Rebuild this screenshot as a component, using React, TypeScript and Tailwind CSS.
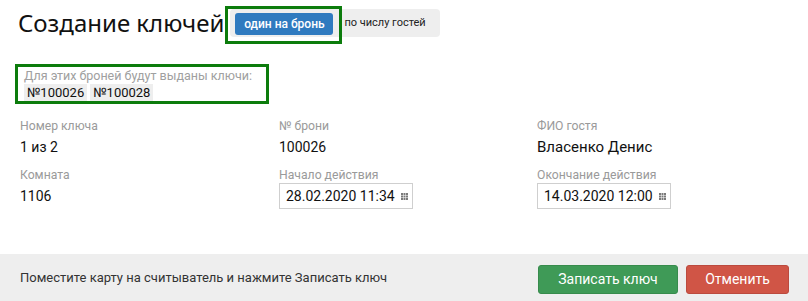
import React from "react";

const GridIcon = () => (
  <svg width="7" height="7" viewBox="0 0 7 7" className="shrink-0">
    {[0, 1, 2].map((r) =>
      [0, 1, 2].map((c) => (
        <rect key={`${r}-${c}`} x={c * 2.5} y={r * 2.5} width="2" height="2" fill="#7a7a7a" />
      ))
    )}
  </svg>
);

function Field({ label, value, big }: { label: string; value: string; big?: boolean }) {
  return (
    <div className="flex flex-col">
      <div className="text-[12.2px] leading-[16px] text-[#9a9a9a]">{label}</div>
      <div className={`mt-[3px] leading-[20px] text-[#111] ${big ? "text-[15px]" : "text-[14px]"}`}>{value}</div>
    </div>
  );
}

function DateField({ label, value }: { label: string; value: string }) {
  return (
    <div className="flex flex-col">
      <div className="text-[12.2px] leading-[16px] text-[#9a9a9a]">{label}</div>
      <div className="flex h-[26px] w-[134px] items-center justify-between border border-[#cfcfcf] pl-[6px] pr-[4px] text-[14px] text-[#111]">
        <span>{value}</span>
        <GridIcon />
      </div>
    </div>
  );
}

export default function App() {
  return (
    <div
      className="flex h-[301px] w-[808px] flex-col bg-white"
      style={{ fontFamily: "Roboto, 'Noto Sans', sans-serif" }}
    >
      <div className="flex-1 px-5">
        {/* Title row */}
        <div className="flex h-[46px] items-center">
          <h1
            className="ml-[-2px] text-[24px] leading-[30px] text-[#111]"
            style={{ fontFamily: "'Noto Sans', sans-serif" }}
          >
            Создание ключей
          </h1>
          <div className="relative ml-[6px] flex h-[28px] items-center rounded-[4px] bg-[#eeeeee] pl-[5px] pr-[14px]">
            <div className="pointer-events-none absolute left-[-5px] top-[-3px] h-[38px] w-[117px] border-[3px] border-[#0c7c0c]" />
            <button className="mt-[1px] h-[22px] w-[98px] rounded-[3px] bg-[#2f7abf] text-[12px] font-medium text-white">
              один на бронь
            </button>
            <span className="ml-[11px] text-[11px] text-[#222]">по числу гостей</span>
          </div>
        </div>

        {/* Reservations */}
        <div className="mt-[18px] ml-[-5px] inline-flex flex-col border-[3px] border-[#0c7c0c] pl-[6px] pr-[14px]">
          <div className="text-[12.5px] leading-[17px] text-[#a0a0a0]">Для этих броней будут выданы ключи:</div>
          <div className="flex gap-[3px]">
            <span className="bg-[#eeeeee] px-[3px] text-[13px] leading-[17px] text-[#111]">№100026</span>
            <span className="bg-[#eeeeee] px-[3px] text-[13px] leading-[17px] text-[#111]">№100028</span>
          </div>
        </div>

        {/* Fields grid */}
        <div className="mt-[14px] grid grid-cols-[259px_258px_1fr] gap-y-[10px]">
          <Field label="Номер ключа" value="1 из 2" />
          <Field label="№ брони" value="100026" />
          <Field label="ФИО гостя" value="Власенко Денис" big />
          <Field label="Комната" value="1106" />
          <DateField label="Начало действия" value="28.02.2020 11:34" />
          <DateField label="Окончание действия" value="14.03.2020 12:00" />
        </div>
      </div>

      {/* Footer */}
      <div className="flex h-[47px] items-center justify-between bg-[#eeeeee] pl-5 pr-[19px]">
        <span className="text-[13px] text-[#333]">
          Поместите карту на считыватель и нажмите Записать ключ
        </span>
        <div className="mt-[3px] flex gap-[8px]">
          <button className="h-[29px] w-[140px] rounded-[3px] border border-[#378b4c] bg-[#3f9a57] text-[14px] text-white">
            Записать ключ
          </button>
          <button className="h-[29px] w-[103px] rounded-[3px] border border-[#bb4a3e] bg-[#d05546] text-[14px] text-white">
            Отменить
          </button>
        </div>
      </div>
    </div>
  );
}
